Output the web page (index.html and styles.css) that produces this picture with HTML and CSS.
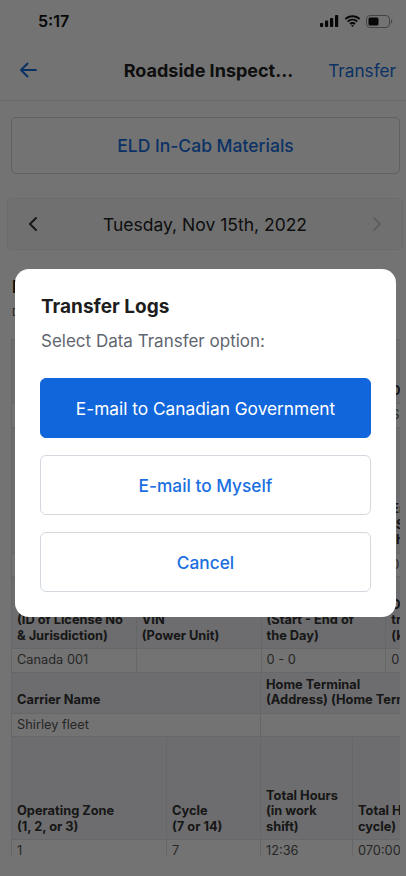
FILE: index.html
```html
<!DOCTYPE html>
<html>
<head>
	<title>Roadside Inspection</title>
	<meta charset="utf-8">
	<link rel="stylesheet" href="styles.css">
</head>
<body>
	<div class="phone">
		<div class="status">
			<span class="time">5:17</span>
			<span class="status-icons">
				<svg width="19" height="12" viewBox="0 0 19 12"><rect x="0" y="8" width="3.2" height="4" rx="0.8"/><rect x="5" y="5.5" width="3.2" height="6.5" rx="0.8"/><rect x="10" y="3" width="3.2" height="9" rx="0.8"/><rect x="15" y="0" width="3.2" height="12" rx="0.8"/></svg>
				<svg width="17" height="12" viewBox="0 0 17 12"><path d="M8.5 2.2c2.5 0 4.8 1 6.5 2.6l1.3-1.3C14.2 1.5 11.5 0.3 8.5 0.3S2.8 1.5 0.7 3.5L2 4.8c1.7-1.6 4-2.6 6.5-2.6z"/><path d="M8.5 5.6c1.6 0 3 .6 4.1 1.6l1.3-1.3C12.5 4.6 10.6 3.8 8.5 3.8S4.5 4.6 3.1 5.9l1.3 1.3c1.1-1 2.5-1.6 4.1-1.6z"/><path d="M8.5 9c.7 0 1.3.3 1.8.7l1.3-1.3c-.8-.8-1.900-1.300-3.100-1.300s-2.3.5-3.1 1.3l1.3 1.3c.5-.4 1.1-.7 1.8-.7z M8.5 12l1.5-1.5c-.4-.4-.9-.6-1.5-.6s-1.1.2-1.5.6z"/></svg>
				<svg width="27" height="13" viewBox="0 0 27 13"><rect x="0.5" y="0.5" width="23" height="12" rx="3.5" fill="none" stroke="#999" stroke-width="1"/><rect x="2.5" y="2.5" width="10" height="8" rx="1.5"/><path d="M25 4.5v4c.8-.3 1.3-1 1.3-2s-.5-1.7-1.3-2z" fill="#999"/></svg>
			</span>
		</div>

		<div class="nav">
			<svg class="back" width="18" height="16" viewBox="0 0 18 16"><path d="M17 8H2M8.5 1.5 2 8l6.5 6.5" fill="none" stroke="#1a6fe0" stroke-width="2" stroke-linecap="round" stroke-linejoin="round"/></svg>
			<span class="nav-title">Roadside Inspect...</span>
			<span class="nav-action">Transfer</span>
		</div>

		<div class="content">
			<div class="materials">ELD In-Cab Materials</div>

			<div class="datebar">
				<svg width="10" height="16" viewBox="0 0 10 16"><path d="M8 2 2 8l6 6" fill="none" stroke="#333" stroke-width="2" stroke-linecap="round" stroke-linejoin="round"/></svg>
				<span class="date">Tuesday, Nov 15th, 2022</span>
				<svg width="10" height="16" viewBox="0 0 10 16"><path d="M2 2l6 6-6 6" fill="none" stroke="#c4c4c4" stroke-width="1.6" stroke-linecap="round" stroke-linejoin="round"/></svg>
			</div>

			<h2 class="section">Driver Details</h2>
			<p class="note">Driver's record of duty status</p>

			<div class="grid">
				<table class="log cols-a">
					<tr class="head h64">
						<th>Record Date</th><th>Period Start<br>Time</th><th>Time Zone</th><th>Driver Name</th>
					</tr>
					<tr><td>11-15-2022</td><td>00:00</td><td>PST</td><td>Shirley</td></tr>
					<tr class="head h126">
						<th>Driver ID</th><th>Co-Driver<br>Name</th><th>Co-Driver ID</th><th>Engine Hours<br>(Start - End of<br>the Day)</th>
					</tr>
					<tr><td>001</td><td></td><td></td><td>0 - 0</td></tr>
					<tr class="head h70">
						<th>Driver's License<br>Number<br>(ID of License No<br>&amp; Jurisdiction)</th><th>Truck / Tractor<br>VIN<br>(Power Unit)</th><th>Odometer<br>(Start - End of<br>the Day)</th><th>Distance<br>travelled today<br>(km)</th>
					</tr>
					<tr><td>Canada 001</td><td></td><td>0 - 0</td><td>0</td></tr>
				</table>

				<table class="log cols-b">
					<tr class="head h39">
						<th>Carrier Name</th><th>Home Terminal<br>(Address) (Home Terminal)</th>
					</tr>
					<tr><td>Shirley fleet</td><td></td></tr>
				</table>

				<table class="log cols-c">
					<tr class="head h103">
						<th>Operating Zone<br>(1, 2, or 3)</th><th>Cycle<br>(7 or 14)</th><th>Total Hours<br>(in work<br>shift)</th><th>Total Hours (in<br>cycle)</th>
					</tr>
					<tr><td>1</td><td>7</td><td>12:36</td><td>070:00</td></tr>
				</table>
			</div>
		</div>

		<div class="overlay">
			<div class="modal">
				<h3 class="modal-title">Transfer Logs</h3>
				<p class="modal-sub">Select Data Transfer option:</p>
				<button class="btn primary">E-mail to Canadian Government</button>
				<button class="btn">E-mail to Myself</button>
				<button class="btn">Cancel</button>
			</div>
		</div>
	</div>
</body>
</html>
```

FILE: styles.css
```css
*{
	box-sizing: border-box;
}
body{
	margin: 0;
	font-family: Inter, "Noto Sans", sans-serif;
	background: #fff;
	color: #222;
}
.phone{
	position: relative;
	width: 406px;
	height: 876px;
	overflow: hidden;
}
.status{
	height: 40px;
	display: flex;
	align-items: center;
	justify-content: space-between;
	padding: 0 13px 0 38px;
}
.time{
	font-size: 16px;
	font-weight: 600;
	color: #111;
	padding-top: 2px;
}
.status-icons{
	display: flex;
	align-items: center;
	gap: 5px;
	padding-top: 2px;
}
.status-icons svg{
	fill: #111;
}
.nav{
	height: 61px;
	display: grid;
	grid-template-columns: 1fr auto 1fr;
	align-items: center;
	padding: 0 10px 0 19px;
	border-bottom: 1px solid #e6e6e6;
}
.nav-title{
	font-size: 18px;
	font-weight: 700;
	color: #222;
	padding-left: 2px;
}
.nav-action{
	font-size: 17.2px;
	color: #1a6fe0;
	justify-self: end;
}
.content{
	height: 756px;
	overflow: hidden;
}
.materials{
	margin: 16px 6px 0 11px;
	height: 57px;
	border: 1px solid #d4d4d4;
	border-radius: 5px;
	display: flex;
	align-items: center;
	justify-content: center;
	color: #1a6fe0;
	font-size: 17.5px;
	font-weight: 500;
}
.datebar{
	margin: 24px 3px 0 7px;
	height: 52px;
	border: 1px solid #ececec;
	border-radius: 5px;
	background: #f9f9f9;
	display: flex;
	align-items: center;
	justify-content: space-between;
	padding: 0 20px 0 20px;
}
.date{
	font-size: 17.5px;
	color: #222;
}
.section{
	margin: 27px 0 0 12px;
	font-size: 17px;
	font-weight: 700;
	color: #222;
}
.note{
	margin: 8px 0 0 12px;
	font-size: 11px;
	color: #555;
}
.grid{
	margin: 20px 6px 0 11px;
	overflow: hidden;
}
.log{
	border-collapse: collapse;
	table-layout: fixed;
	font-size: 12.8px;
	line-height: 15.5px;
}
.log th, .log td{
	border: 1px solid #e2e4e8;
	text-align: left;
	padding: 4px 5px;
	white-space: nowrap;
}
.log th{
	background: #f1f2f5;
	font-weight: 700;
	color: #333;
	vertical-align: bottom;
	padding-bottom: 5px;
}
.log td{
	color: #555;
	height: 23px;
	padding-top: 3px;
}
.h39 th{ height: 39px; }
.h64 th{ height: 64px; }
.h70 th{ height: 70px; }
.h103 th{ height: 103px; }
.h126 th{ height: 126px; }
.cols-a{
	width: 500px;
}
.cols-a th, .cols-a td{
	width: 124.5px;
	overflow: hidden;
}
.cols-b{
	width: 500px;
	margin-top: -1px;
}
.cols-b th:first-child{
	width: 249px;
}
.cols-c{
	width: 480px;
	margin-top: -1px;
}
.cols-c th:nth-child(1){ width: 155px; }
.cols-c th:nth-child(2){ width: 94px; }
.cols-c th:nth-child(3){ width: 92px; }
.cols-c th:nth-child(4){ width: 139px; }
.overlay{
	position: absolute;
	inset: 0;
	background: rgba(0, 0, 0, 0.55);
	display: flex;
	justify-content: center;
	align-items: flex-start;
	padding: 269px 10px 0 15px;
}
.modal{
	width: 381px;
	background: #fff;
	border-radius: 14px;
	padding: 26px 25px 25px 25px;
	display: flex;
	flex-direction: column;
}
.modal-title{
	margin: 0;
	font-size: 19px;
	line-height: 24px;
	font-weight: 700;
	color: #1d1d1d;
	padding-left: 1px;
}
.modal-sub{
	margin: 11px 0 26px 1px;
	font-size: 17px;
	line-height: 22px;
	color: #5f6670;
}
.btn{
	height: 60px;
	border: 1px solid #d3d8df;
	border-radius: 6px;
	background: #fff;
	color: #1a6fe0;
	font-family: Inter, "Noto Sans", sans-serif;
	font-size: 17.3px;
	font-weight: 500;
	margin-bottom: 17px;
}
.btn:last-child{
	margin-bottom: 0;
}
.btn.primary{
	background: #1166dc;
	border-color: #1166dc;
	color: #fff;
	font-weight: 400;
}
```
